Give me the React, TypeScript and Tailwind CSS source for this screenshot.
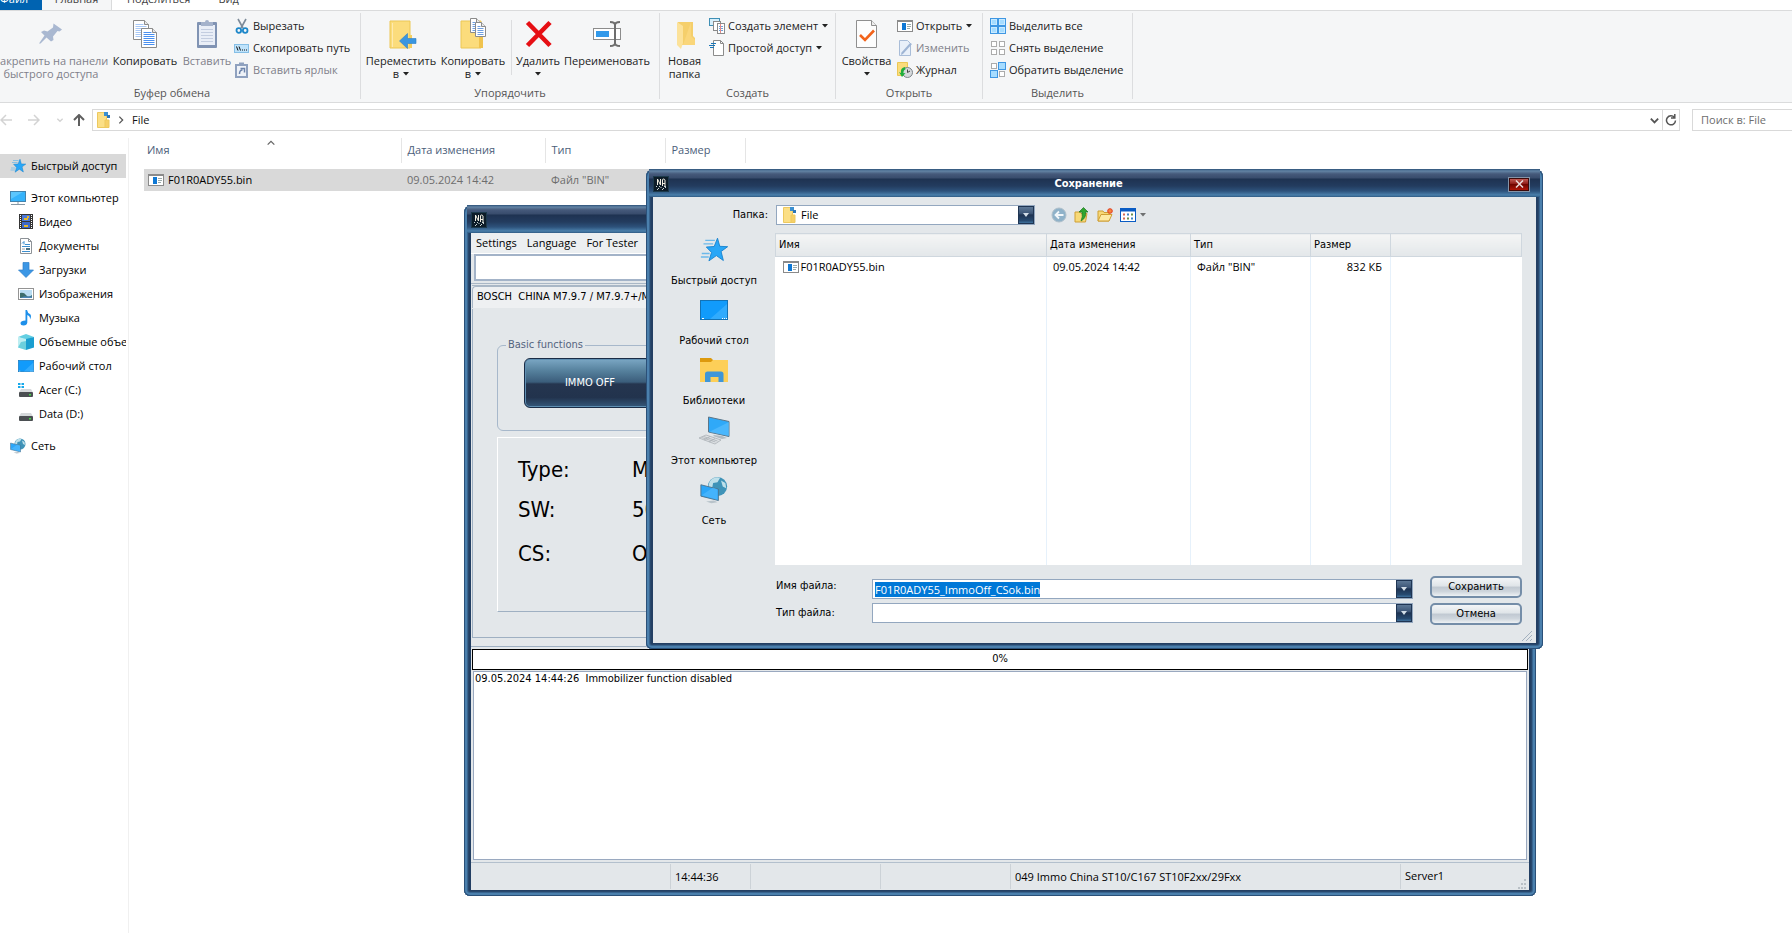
import { useEffect, useRef } from "react";
import type { ReactNode } from "react";

/* ---------- small drawings ---------- */

function Svg({ size = 16, box = 16, children }: { size?: number; box?: number; children: ReactNode }) {
  return (
    <svg width={size} height={size} viewBox={`0 0 ${box} ${box}`} className="block shrink-0" aria-hidden="true">
      {children}
    </svg>
  );
}

const PinIcon = () => (
  <Svg size={32} box={32}>
    <path d="M18.500 6.500L27 12.500 24.500 14.500 22.500 14 18 19.500 18.500 23 16 24.500 11.500 20.500 5.500 26.500 4 26.500 9.500 18.500 6 15 9 13.500 12.500 14.500 18 10.500Z" fill="#a9b8d1" />
  </Svg>
);

const Sheet = ({ x, y, w, h, stroke = "#8b8b8b", line = "#6f9fe0" }: { x: number; y: number; w: number; h: number; stroke?: string; line?: string }) => (
  <g>
    <path d={`M${x} ${y}h${w - 4}l4 4v${h - 4}h-${w}z`} fill="#fff" stroke={stroke} />
    <path d={`M${x + w - 4} ${y}v4h4`} fill="#e8e8e8" stroke={stroke} />
    {[4, 6, 8, 10, 12, 14, 16].filter((d) => d < h - 1).map((d) => (
      <path key={d} d={`M${x + 2} ${y + d}h${d < 5 ? w - 7 : w - 4}`} stroke={line} />
    ))}
  </g>
);

const CopyIcon = () => (
  <Svg size={32} box={32}>
    <Sheet x={4.5} y={3.5} w={15} h={19} line="#a9c8f5" />
    <Sheet x={12.5} y={11.5} w={15} h={19} line="#4a90f0" />
  </Svg>
);

const PasteIcon = () => (
  <Svg size={32} box={32}>
    <rect x="6" y="5" width="20" height="26" rx="1" fill="#8093b3" />
    <rect x="8" y="8" width="16" height="20" fill="#e9eef7" />
    <path d="M10 12.500h12M10 15.500h12M10 18.500h12M10 21.500h12M10 24.500h12" stroke="#c3cde0" />
    <path d="M10 5h4a2 2 0 0 1 4 0h4v4H10z" fill="#a4b2cb" />
  </Svg>
);

const CutIcon = () => (
  <Svg>
    <path d="M4 1l5 9M12 1L7 10" stroke="#7d8b99" strokeWidth="1.600" fill="none" />
    <circle cx="4.800" cy="12.500" r="2.300" fill="none" stroke="#1d87c9" strokeWidth="1.800" />
    <circle cx="11.200" cy="12.500" r="2.300" fill="none" stroke="#1d87c9" strokeWidth="1.800" />
  </Svg>
);

const PathIcon = () => (
  <Svg>
    <rect x="0.500" y="4.500" width="14" height="8" fill="#bfe3fb" stroke="#86bfe6" />
    <path d="M2.500 6.500l1.500 4M5 6.500l1.500 4" stroke="#111" />
    <path d="M8 10h1M10 10h1M12 10h1" stroke="#111" />
  </Svg>
);

const PasteLinkIcon = () => (
  <Svg>
    <rect x="1" y="2" width="13" height="14" fill="#8fa1bf" />
    <rect x="3" y="4" width="9" height="10" fill="#eef2f8" />
    <rect x="5" y="0.500" width="5" height="3" fill="#8fa1bf" />
    <path d="M5.500 12c0-3 1-4 3-4M6.500 6.500h4v4" stroke="#6d84ab" strokeWidth="1.500" fill="none" />
  </Svg>
);

const MoveIcon = () => (
  <Svg size={32} box={32}>
    <path d="M5 4h20v27H5z" fill="#fbdc7c" stroke="#ecc755" />
    <path d="M24 18h3v13h-3z" fill="#f5cf60" />
    <path d="M7.500 6v24" stroke="#fdeab0" />
    <path d="M14.500 24l8-7.500v5H31v5h-8.500v5z" fill="#3a96e0" stroke="#2b7fc7" strokeWidth="0.600" />
  </Svg>
);

const CopyToIcon = () => (
  <Svg size={32} box={32}>
    <path d="M4 4h20v27H4z" fill="#fbdc7c" stroke="#ecc755" />
    <path d="M22 20h4v11h-4z" fill="#f0c34e" />
    <Sheet x={13.5} y={1.5} w={10} h={14} />
    <Sheet x={18.5} y={5.5} w={10} h={14} />
  </Svg>
);

const DeleteIcon = () => (
  <Svg size={32} box={32}>
    <path d="M5.500 5.500L28 28.500M28 5.500L5.500 28.500" stroke="#e60f14" strokeWidth="4.600" />
  </Svg>
);

const RenameIcon = () => (
  <Svg size={32} box={32}>
    <rect x="2.500" y="11.500" width="27" height="11" fill="#fff" stroke="#8c8c8c" />
    <rect x="5" y="14" width="13" height="6" fill="#3299ea" />
    <path d="M19 5q5 0 5 3q0-3 5-3M19 29q5 0 5-3q0 3 5 3M24 7v20" stroke="#6e6e6e" strokeWidth="2" fill="none" />
  </Svg>
);

const NewFolderIcon = () => (
  <Svg size={32} box={32}>
    <path d="M9 5h15v14l2 2v7H12z" fill="#f5cf6b" />
    <path d="M8 5l6 4v17l-2 6-4-4z" fill="#fce29a" />
    <path d="M22 5v14l4 4v5H14" fill="#fad67a" />
  </Svg>
);

const NewItemIcon = () => (
  <Svg>
    <rect x="0.500" y="0.500" width="10" height="7" fill="#d7effb" stroke="#3f8fb5" />
    <rect x="4.500" y="3.500" width="7" height="9" fill="#fff" stroke="#8b8b8b" />
    <rect x="8.500" y="5.500" width="7" height="10" fill="#fff" stroke="#8b8b8b" />
    <path d="M10 8.500h4M10 10.500h4M10 12.500h4" stroke="#6ca0dc" />
    <path d="M11.500 6v9" stroke="#e58b8b" />
  </Svg>
);

const EasyAccessIcon = () => (
  <Svg>
    <path d="M4.500 0.500h7l3 3v12h-10z" fill="#fff" stroke="#8b8b8b" />
    <path d="M11.500 0.500v3h3" fill="none" stroke="#8b8b8b" />
    <path d="M2 3.500h5M0 5.500h6M1 7.500h4" stroke="#1b77b8" />
  </Svg>
);

const PropertiesIcon = () => (
  <Svg size={32} box={32}>
    <path d="M5.500 3.500h15l5 5v22h-20z" fill="#fdfdfd" stroke="#8f8f8f" />
    <path d="M20.500 3.500v5h5" fill="#eee" stroke="#8f8f8f" />
    <path d="M9 18l5 5 9-9.500" stroke="#f2631b" strokeWidth="2.600" fill="none" />
  </Svg>
);

const BinIcon = () => (
  <Svg>
    <rect x="0.500" y="2.500" width="15" height="11" fill="#fff" stroke="#8a8a8a" />
    <path d="M0 3h16" stroke="#8a8a8a" strokeWidth="2" />
    <rect x="5" y="5" width="4" height="7" fill="#0f78d4" />
    <path d="M10 6.500h4M10 8.500h4M10 10.500h3" stroke="#9aa" />
  </Svg>
);

const EditIcon = () => (
  <Svg>
    <path d="M2.500 0.500h8l3 3v12h-11z" fill="#e9f0f9" stroke="#a9bdd8" />
    <path d="M15 4L6 14l-2 1 .5-2.500L13 3z" fill="#9fb5d4" />
  </Svg>
);

const HistoryIcon = () => (
  <Svg>
    <path d="M0.500 0.500h10v13h-10z" fill="#fbdc7c" stroke="#ecc755" />
    <circle cx="10.500" cy="10.500" r="5" fill="#d5d9dc" stroke="#7c8388" />
    <path d="M10.500 7.500v3l2.500-1.500" stroke="#444" fill="none" />
    <path d="M8 5q-5 1-4 6l-2-1 3 5 3.500-4-2 .3q-.5-3 2-4z" fill="#1fae3c" />
  </Svg>
);

const tiles = [[1, 1], [9, 1], [1, 9], [9, 9]];

const SelectAllIcon = () => (
  <Svg>
    <rect width="16" height="16" fill="#3f97e3" />
    {tiles.map(([x, y]) => (
      <rect key={`${x}${y}`} x={x + 0.5} y={y + 0.5} width="5" height="5" fill="#a6dcff" stroke="#c9eaff" />
    ))}
  </Svg>
);
const SelectNoneIcon = () => (
  <Svg>
    {tiles.map(([x, y]) => (
      <rect key={`${x}${y}`} x={x + 0.5} y={y + 0.5} width="5" height="5" fill="#fff" stroke="#ababab" />
    ))}
  </Svg>
);
const InvertIcon = () => (
  <Svg>
    <rect x="1.500" y="1.500" width="5" height="5" fill="#fff" stroke="#ababab" />
    <rect x="9.500" y="9.500" width="5" height="5" fill="#fff" stroke="#ababab" />
    <rect x="8.500" y="0.500" width="7" height="7" fill="#a6dcff" stroke="#3f97e3" />
    <rect x="0.500" y="8.500" width="7" height="7" fill="#a6dcff" stroke="#3f97e3" />
  </Svg>
);

const FolderDoc = () => (
  <Svg>
    <path d="M1.500 0.500h9v15h-9z" fill="#fbdf86" stroke="#edc95f" />
    <path d="M9 8h4v7.500H9z" fill="#f6d068" stroke="#edc95f" />
    <rect x="8" y="0" width="4" height="4" fill="#3a8fd0" />
    <rect x="11" y="3" width="3" height="3" fill="#2c76b8" />
  </Svg>
);

const StarIcon = ({ size = 16 }: { size?: number }) => (
  <Svg size={size} box={32}>
    <path d="M6 5h11M4 9h11M2 20h9M1 24h9" stroke="#6cb9ea" strokeWidth="1.500" />
    <path d="M20 2.500l2.600 9.300 9 .4-7.500 5.500 2.600 10.300-8-5.600-8.500 6 3-9.600-6-6.200 9-.6z" fill="#29a7f7" stroke="#1580cd" />
  </Svg>
);

const ScreenIcon = () => (
  <Svg>
    <rect x="0.500" y="1.500" width="15" height="10" fill="#35b3fb" stroke="#4283ad" />
    <path d="M1 9L13 2H1z" fill="#74d2ff" opacity=".6" />
    <path d="M8 12v2M1 14.500h14" stroke="#8798a5" />
  </Svg>
);

const VideoIcon = () => (
  <Svg>
    <rect x="1" y="0" width="14" height="15" fill="#353535" />
    <rect x="4" y="1" width="8" height="6" fill="#4d79d8" />
    <rect x="4" y="8" width="8" height="6" fill="#3d67c8" />
    <path d="M2.500 1v13M13.500 1v13" stroke="#fff" strokeDasharray="1 1" />
    <path d="M6 5h4M6 12h4M9 3h2" stroke="#e7b828" strokeWidth="2" />
  </Svg>
);

const DocumentIcon = () => (
  <Svg>
    <path d="M2.500 0.500h8l3 3v12h-11z" fill="#fff" stroke="#8d9297" />
    <path d="M10.500 0.500v3h3" fill="none" stroke="#8d9297" />
    <path d="M4 5.500l2-2v3M7 6.500h5M4 8.500h8M4 13.500h8" stroke="#3d8fcf" fill="none" />
    <path d="M4 11h3" stroke="#a4a4a4" />
    <rect x="8" y="10" width="4" height="2" fill="#4c7080" />
  </Svg>
);

const DownloadIcon = () => (
  <Svg>
    <path d="M5 0.500h6V8h4.500L8 15.500.500 8H5z" fill="#3c97e5" stroke="#2f7fc9" strokeWidth="0.700" />
  </Svg>
);

const PictureIcon = () => (
  <Svg>
    <rect x="0.500" y="2.500" width="15" height="11" fill="#fff" stroke="#949494" />
    <rect x="2" y="4" width="12" height="8" fill="#b9ddf3" />
    <path d="M2 7q4-1 6 2t6 0v3H2z" fill="#3d6e6c" />
    <path d="M6 10.500h8V12H2z" fill="#4a86b8" />
  </Svg>
);

const MusicIcon = () => (
  <Svg>
    <path d="M7.500 0H9q.5 3 3 4 2 1.500 0 5.500Q12.500 6 9.300 5v7.500Q9 15.500 5.500 15.500 2.500 15.500 2.500 13q.3-2.600 5-2.600z" fill="#1e90ea" />
  </Svg>
);

const CubeIcon = () => (
  <Svg>
    <path d="M0 3l8-3 8 3-8 3z" fill="#63cfe2" />
    <path d="M0 3l8 2v11l-8-2.500z" fill="#bdeef2" />
    <path d="M16 3L8 5v11l8-2.500z" fill="#1a9ed0" />
    <path d="M3 8l5-1v9l-8-2.500z" fill="#47c2d4" opacity=".7" />
  </Svg>
);

const DesktopIcon = ({ w = 16, h = 12 }: { w?: number; h?: number }) => (
  <svg width={w} height={h} viewBox="0 0 28 20" preserveAspectRatio="none" className="block shrink-0" aria-hidden="true">
    <rect x="0.500" y="0.500" width="27" height="19" fill="#119bfb" stroke="#1272b6" />
    <path d="M10 19L27 4v15z" fill="#48b6ff" opacity=".6" />
    <path d="M2 18.500h2M22 18.500h1M24 18.500h1M26 18.500h1" stroke="#fff" />
  </svg>
);

const DriveIcon = ({ win }: { win?: boolean }) => (
  <Svg>
    <path d="M3 7h10l2 3.500H1z" fill="#d6d9db" />
    <rect x="1" y="10" width="14" height="5" rx="1" fill="#4b4f52" />
    <rect x="11" y="12" width="2" height="1.500" fill="#45d845" />
    {win && <path d="M0 1h2.500v2H0zM3.500 1H6v2H3.500zM0 4h2.500v2H0zM3.500 4H6v2H3.500z" fill="#18a9ea" />}
  </Svg>
);

const NetworkIcon = ({ size = 16 }: { size?: number }) => (
  <Svg size={size} box={32}>
    <circle cx="20" cy="12" r="11" fill="#3f93b8" />
    <path d="M13 4q5-4 10-2l-3 5-5 1-1 5-4 1q-1-6 3-10zM24 5l5 3 1 6-4-2z" fill="#bfe0ea" />
    <path d="M1 10l20 5v13L1 23z" fill="#2ba6f8" stroke="#4d6f87" />
    <path d="M2 22l13-9 5 2v12z" fill="#55bdff" opacity=".6" />
    <path d="M7 29l6 2 7-1-4-2z" fill="#b8c3ca" />
  </Svg>
);

const LibraryIcon = () => (
  <Svg size={32} box={32}>
    <path d="M2 4h11l2 2v4H2z" fill="#dd9a0e" />
    <path d="M2 8h11l2-2h15v22H2z" fill="#fdcf58" />
    <path d="M7 28V20q0-2.500 2.500-2.500h13.500q2.500 0 2.500 2.500v8h-5v-5h-8v5z" fill="#3f96d8" />
  </Svg>
);

const LaptopIcon = () => (
  <Svg size={32} box={32}>
    <path d="M10.500 3L31 7.500v15L10.500 18z" fill="#2fa9f8" stroke="#5b7689" />
    <path d="M11 18L31 8v14z" fill="#62c3ff" opacity=".55" />
    <path d="M16 21l8 1 5 2-5 1-9-3z" fill="#b3bcc2" />
    <path d="M1 24l7-3 15 5-6 4z" fill="#dfe2e5" stroke="#a9b0b5" strokeWidth="0.800" />
    <path d="M3.500 23.500l14 4.500M5.500 22.500l14 4.500M6 26l6-3.500M11 28l6-3.500" stroke="#a9b0b5" strokeWidth="0.800" />
  </Svg>
);

const AppIcon = ({ cls = "" }: { cls?: string }) => (
  <span className={`block size-4 shrink-0 ${cls}`}>
    <Svg>
      <rect width="16" height="16" fill="#0d1c28" />
      <rect x="0.500" y="0.500" width="15" height="15" fill="none" stroke="#1c3a4c" />
      <path d="M4.500 9V3l3 6V3M9.500 10V4q0-1 1-1t1.500 1v6M9 7.500h3" stroke="#f3efe2" fill="none" />
      <path d="M3 10.500h1M5 12.500h1M7.500 11.500h1M10 12.500h1M4 13.500h1M9 13.500h1M12 11.500h1M6 10.500h1M11 10.500h2" stroke="#c9d4d4" />
    </Svg>
  </span>
);

const Caret = () => (
  <svg width="6" height="4" viewBox="0 0 6 4" className="block shrink-0" aria-hidden="true">
    <path d="M0 0h6L3 3.500z" fill="#222" />
  </svg>
);

/* ---------- explorer ribbon ---------- */

function BigButton({ icon, lines, width, caret, dim }: { icon: ReactNode; lines: string[]; width: string; caret?: boolean; dim?: boolean }) {
  return (
    <button className={`flex shrink-0 flex-col items-center pt-1 leading-[13px] ${width} ${dim ? "text-[#80808a]" : "text-[#222]"}`}>
      <span className="mb-[5px]">{icon}</span>
      {lines.map((l, i) => (
        <span key={i} className="flex h-[13px] items-center gap-1 whitespace-nowrap">
          {l}
          {caret && i === lines.length - 1 && <Caret />}
        </span>
      ))}
    </button>
  );
}

function SmallButton({ icon, label, caret, dim }: { icon: ReactNode; label: string; caret?: boolean; dim?: boolean }) {
  return (
    <button className={`flex h-[22px] items-center whitespace-nowrap ${dim ? "text-[#80808a]" : "text-[#222]"}`}>
      {icon}
      <span className="ml-[3px]">{label}</span>
      {caret && <span className="ml-1"><Caret /></span>}
    </button>
  );
}

function RibbonGroup({ title, width, titlePad = "", children }: { title: string; width: string; titlePad?: string; children: ReactNode }) {
  return (
    <section className={`flex h-[86px] shrink-0 flex-col justify-between border-r border-[#dcdddf] ${width}`}>
      <div className="flex">{children}</div>
      <h2 className={`text-center leading-3 text-[#555] ${titlePad}`}>{title}</h2>
    </section>
  );
}

function Ribbon() {
  return (
    <header>
      <nav className="flex h-[11px] items-end overflow-hidden border-b border-[#dadbdc] leading-4 text-[#444]">
        <a href="#file" className="w-[42px] bg-[#0063b1] pb-[3px] text-white">Файл</a>
        <a href="#home" className="flex w-[70px] justify-center border-r border-[#dadbdc] bg-[#f5f6f7] pb-[3px]">Главная</a>
        <a href="#share" className="ml-[15px] pb-[3px]">Поделиться</a>
        <a href="#view" className="ml-7 pb-[3px]">Вид</a>
      </nav>
      <div className="flex border-b border-[#dadbdc] bg-[#f5f6f7] pt-[2px] pb-[3px]">
        <RibbonGroup title="Буфер обмена" width="w-[361px]" titlePad="pr-4">
          <div className="-ml-[6px] flex gap-[2px]">
            <BigButton dim width="w-[114px]" icon={<PinIcon />} lines={["Закрепить на панели", "быстрого доступа"]} />
            <BigButton width="w-[70px]" icon={<CopyIcon />} lines={["Копировать"]} />
            <BigButton dim width="w-[50px]" icon={<PasteIcon />} lines={["Вставить"]} />
            <div className="flex flex-col pt-[2px]">
              <SmallButton icon={<CutIcon />} label="Вырезать" />
              <SmallButton icon={<PathIcon />} label="Скопировать путь" />
              <SmallButton dim icon={<PasteLinkIcon />} label="Вставить ярлык" />
            </div>
          </div>
        </RibbonGroup>
        <RibbonGroup title="Упорядочить" width="w-[299px]">
          <div className="flex pl-[3px]">
            <BigButton caret width="w-[74px]" icon={<MoveIcon />} lines={["Переместить", "в"]} />
            <BigButton caret width="w-[70px]" icon={<CopyToIcon />} lines={["Копировать", "в"]} />
            <span className="mx-[3px] mt-[7px] h-[55px] w-px bg-[#dcdddf]" />
            <BigButton caret width="w-[46px]" icon={<DeleteIcon />} lines={["Удалить", ""]} />
            <BigButton width="w-[92px]" icon={<RenameIcon />} lines={["Переименовать"]} />
          </div>
        </RibbonGroup>
        <RibbonGroup title="Создать" width="w-[176px]">
          <BigButton width="w-[49px]" icon={<NewFolderIcon />} lines={["Новая", "папка"]} />
          <div className="flex flex-col pt-[2px]">
            <SmallButton caret icon={<NewItemIcon />} label="Создать элемент" />
            <SmallButton caret icon={<EasyAccessIcon />} label="Простой доступ" />
          </div>
        </RibbonGroup>
        <RibbonGroup title="Открыть" width="w-[147px]">
          <BigButton caret width="w-[61px]" icon={<PropertiesIcon />} lines={["Свойства", ""]} />
          <div className="flex flex-col pt-[2px]">
            <SmallButton caret icon={<BinIcon />} label="Открыть" />
            <SmallButton dim icon={<EditIcon />} label="Изменить" />
            <SmallButton icon={<HistoryIcon />} label="Журнал" />
          </div>
        </RibbonGroup>
        <RibbonGroup title="Выделить" width="w-[150px]">
          <div className="flex flex-col pt-[2px] pl-[7px]">
            <SmallButton icon={<SelectAllIcon />} label="Выделить все" />
            <SmallButton icon={<SelectNoneIcon />} label="Снять выделение" />
            <SmallButton icon={<InvertIcon />} label="Обратить выделение" />
          </div>
        </RibbonGroup>
      </div>
    </header>
  );
}

function Stroke({ d, color, w = 12, sw = 1.5 }: { d: string; color: string; w?: number; sw?: number }) {
  return (
    <svg width={w} height={w} viewBox="0 0 12 12" className="block shrink-0" aria-hidden="true">
      <path d={d} fill="none" stroke={color} strokeWidth={sw} />
    </svg>
  );
}

function AddressBar() {
  return (
    <div className="mt-[6px] flex h-[22px] items-stretch text-[#111]">
      <div className="flex w-[92px] items-center">
        <button aria-label="Назад" className="w-7"><Stroke d="M12 6H1M6 1L1 6l5 5" color="#d3d3d3" /></button>
        <button aria-label="Вперёд" className="w-7"><Stroke d="M0 6h11M6 1l5 5-5 5" color="#d3d3d3" /></button>
        <button aria-label="Недавние" className="w-[17px]"><Stroke d="M2 4l4 4 4-4" color="#d3d3d3" w={8} sw={2} /></button>
        <button aria-label="Вверх"><Stroke d="M6 12V1M1 6l5-5 5 5" color="#5f5f5f" sw={2} /></button>
      </div>
      <div className="flex flex-1 items-center border border-[#d9d9d9] pl-[3px]">
        <FolderDoc />
        <span className="ml-1"><Stroke d="M4 2l4 4-4 4" color="#555" w={10} /></span>
        <span className="ml-[6px] flex-1">File</span>
        <button aria-label="Журнал адресов" className="mr-[2px]"><Stroke d="M2 4l4 4 4-4" color="#555" w={11} sw={2} /></button>
        <button aria-label="Обновить" className="flex h-full w-[17px] items-center justify-center border-l border-[#d9d9d9]">
          <Stroke d="M9.500 3.500A4.500 4.500 0 1 0 10.500 6.500M9.800 0v4H6" color="#555" />
        </button>
      </div>
      <input aria-label="Поиск в: File" placeholder="Поиск в: File" className="-mr-[2px] ml-3 w-[102px] border border-[#d9d9d9] px-2 outline-none placeholder:text-[#6d6d6d]" />
    </div>
  );
}

const navItems: { label: string; icon: ReactNode }[] = [
  { label: "Видео", icon: <VideoIcon /> },
  { label: "Документы", icon: <DocumentIcon /> },
  { label: "Загрузки", icon: <DownloadIcon /> },
  { label: "Изображения", icon: <PictureIcon /> },
  { label: "Музыка", icon: <MusicIcon /> },
  { label: "Объемные объекты", icon: <CubeIcon /> },
  { label: "Рабочий стол", icon: <DesktopIcon /> },
  { label: "Acer (C:)", icon: <DriveIcon win /> },
  { label: "Data (D:)", icon: <DriveIcon /> },
];

function NavRow({ icon, label, cls = "" }: { icon: ReactNode; label: string; cls?: string }) {
  return (
    <a href="#nav" className={`flex h-6 items-center gap-[5px] overflow-hidden whitespace-nowrap ${cls}`}>
      {icon}
      {label}
    </a>
  );
}

function Explorer() {
  return (
    <div className="flex min-h-screen flex-col">
      <Ribbon />
      <AddressBar />
      <div className="flex flex-1 pt-[7px]">
        <nav className="w-[129px] shrink-0 border-r border-[#f0f0f0] pt-4 pr-[2px] text-black">
          <NavRow cls="bg-[#d9d9d9] pl-[10px]" icon={<StarIcon />} label="Быстрый доступ" />
          <NavRow cls="mt-2 pl-[10px]" icon={<ScreenIcon />} label="Этот компьютер" />
          {navItems.map((n) => (
            <NavRow key={n.label} cls="pl-[18px]" icon={n.icon} label={n.label} />
          ))}
          <NavRow cls="mt-2 pl-[10px]" icon={<NetworkIcon />} label="Сеть" />
        </nav>
        <main className="relative pl-[15px]">
          <span className="absolute top-0 left-[137px]"><Stroke d="M2 8l4-4 4 4" color="#666" w={10} /></span>
          <table className="w-[601px] table-fixed border-collapse text-left">
            <colgroup>
              <col className="w-[257px]" />
              <col className="w-36" />
              <col className="w-[120px]" />
              <col className="w-20" />
            </colgroup>
            <thead>
              <tr className="h-[25px] text-[#4c607a]">
                <th className="border-r border-[#e5e5e5] pl-[3px] font-normal">Имя</th>
                <th className="border-r border-[#e5e5e5] pl-[6px] font-normal">Дата изменения</th>
                <th className="border-r border-[#e5e5e5] pl-[6px] font-normal">Тип</th>
                <th className="border-r border-[#e5e5e5] pl-[6px] font-normal">Размер</th>
              </tr>
            </thead>
            <tbody>
              <tr><td colSpan={4} className="h-[6px]" /></tr>
              <tr className="h-[22px] bg-[#d9d9d9] text-[#6d6d6d]">
                <td className="pl-1 text-black">
                  <span className="flex items-center gap-1"><BinIcon />F01R0ADY55.bin</span>
                </td>
                <td className="pl-[6px]">09.05.2024 14:42</td>
                <td className="pl-[6px]">Файл "BIN"</td>
                <td />
              </tr>
            </tbody>
          </table>
        </main>
      </div>
    </div>
  );
}

/* ---------- skinned windows ---------- */

const frame =
  "rounded-t-lg rounded-b-md bg-[#233f63] px-[7px] pb-[6px] shadow-[inset_0_0_0_1px_#2b5078,inset_0_0_0_3px_#4b80ad,inset_0_0_0_4px_#38648f,inset_0_0_0_5px_#28486d]";
const titleBar =
  "-mx-[4px] flex items-center bg-[linear-gradient(to_bottom,#2b5078_0px,#6384a5_2px,#45597a_5px,#384c6c_9px,#1e3251_10px,#233c5f_17px,#2d527b_22px,#4a7fab_26px,#2f5a84_28px)]";

function ToolWindow() {
  return (
    <section className={`absolute top-[205px] left-[464px] flex h-[691px] w-[1072px] flex-col ${frame}`}>
      <div className={`h-7 shrink-0 pt-[2px] pl-[4px] ${titleBar}`}><AppIcon /></div>
      <div className="flex flex-1 flex-col bg-[#e3e7ea] text-black">
        <nav className="flex h-5 items-center gap-[10px] bg-[#eceff1] pl-[5px] font-['Open_Sans','Noto_Sans',sans-serif]">
          <button>Settings</button>
          <button>Language</button>
          <button>For Tester</button>
        </nav>
        <div className="border-y border-[#a9b7c6] border-t-white px-[3px] pb-[2px]">
          <input aria-label="Файл" className="block h-[27px] w-full border-2 border-[#a3b3c8] bg-white outline-none" />
        </div>
        <div className="mx-px mt-[1px] h-[24px] border-t border-[#a9b7c6]">
          <button className="h-[22px] rounded-tl border-t border-l border-[#a9b7c6] bg-[#eef0f2] px-1 whitespace-pre">BOSCH  CHINA M7.9.7 / M7.9.7+/ME7.9.7</button>
        </div>
        <div className="mx-px flex h-[329px] flex-col border-b border-l border-[#9fb0c2] pt-[28px] pl-6">
          <fieldset className="mr-6 h-[94px] rounded-md border border-[#a7b8cb] pl-[26px]">
            <legend className="-ml-[18px] px-[2px] leading-4 text-[#54647f]">Basic functions</legend>
            <button className="mt-[5px] flex h-[50px] w-[132px] items-center justify-center rounded-md border border-[#1b2d47] bg-[linear-gradient(to_bottom,#7ba7c4_0%,#55809c_25%,#3b5d7b_48%,#25354f_52%,#22334d_80%,#35587a_100%)] text-white shadow-[inset_0_0_0_1px_#5f8fb2]">
              IMMO OFF
            </button>
          </fieldset>
          <dl className="mt-[6px] mr-6 grid h-[175px] grid-cols-[114px_1fr] content-start border-t border-b border-l border-white border-b-[#9fb0c2] pt-3 pl-5 text-[22px] leading-10">
            <dt>Type:</dt>
            <dd>M7.9.7</dd>
            <dt>SW:</dt>
            <dd>50</dd>
            <dt className="pt-1">CS:</dt>
            <dd className="pt-1">OK</dd>
          </dl>
        </div>
        <div className="mt-2 flex flex-1 flex-col border-t border-[#9fb0c2] px-px pt-[2px]">
          <div role="progressbar" aria-valuenow={0} aria-label="Ход" className="flex h-[21px] items-center justify-center border border-black bg-white">0%</div>
          <div className="mx-px mt-px flex-1 border border-[#9aa9c0] bg-white px-px leading-[14px] whitespace-pre">
            09.05.2024 14:44:26  Immobilizer function disabled
          </div>
        </div>
        <footer className="relative mt-[2px] flex h-7 items-center border-t border-[#b3c0cd] font-['Open_Sans','Noto_Sans',sans-serif]">
          <span className="h-[25px] w-[200px] border-r border-[#ccd2d7]" />
          <span className="h-[25px] w-[80px] border-r border-[#ccd2d7] pl-1 leading-[25px]">14:44:36</span>
          <span className="h-[25px] w-[130px] border-r border-[#ccd2d7]" />
          <span className="h-[25px] w-[130px] border-r border-[#ccd2d7]" />
          <span className="h-[25px] flex-1 border-r border-[#ccd2d7] pl-1 leading-[25px]">049 Immo China ST10/C167 ST10F2xx/29Fxx</span>
          <span className="w-[128px] pl-1">Server1</span>
          <svg width="10" height="10" viewBox="0 0 10 10" className="absolute right-px bottom-px" aria-hidden="true">
            <path d="M6 0h2v2H6zM6 4h2v2H6zM3 4h2v2H3zM0 8h2v2H0zM3 8h2v2H3zM6 8h2v2H6z" fill="#b9c0c6" />
          </svg>
        </footer>
      </div>
    </section>
  );
}

const DropArrow = () => (
  <span className="pointer-events-none absolute top-px right-px bottom-px flex w-4 items-center justify-center border border-[#1f3553] bg-[linear-gradient(to_bottom,#5d7896_0%,#3d5677_40%,#1e3352_50%,#274a70_85%,#3f719d_100%)]">
    <svg width="6" height="4" viewBox="0 0 6 4" aria-hidden="true"><path d="M0 0h6L3 4z" fill="#d3dee8" /></svg>
  </span>
);

const places: { label: string; icon: ReactNode }[] = [
  { label: "Быстрый доступ", icon: <StarIcon size={28} /> },
  { label: "Рабочий стол", icon: <DesktopIcon w={28} h={20} /> },
  { label: "Библиотеки", icon: <LibraryIcon /> },
  { label: "Этот компьютер", icon: <LaptopIcon /> },
  { label: "Сеть", icon: <NetworkIcon size={28} /> },
];

const skinButton =
  "h-[22px] w-[92px] rounded-[5px] border-2 border-[#748da8] bg-[linear-gradient(to_bottom,#f3f5f7_0%,#dfe4e8_45%,#c0c8d1_50%,#ced5dc_75%,#edf1f4_100%)] leading-[18px]";
const headCell = "border border-[#cfd7de] bg-[linear-gradient(to_bottom,#f4f5f5,#e3e7ea)] pl-[3px] font-normal";
const bodyCell = "border-r border-[#e6f1fb] align-top";

function SaveDialog() {
  const nameRef = useRef<HTMLInputElement>(null);
  useEffect(() => {
    nameRef.current?.focus();
    nameRef.current?.select();
  }, []);

  return (
    <section role="dialog" aria-label="Сохранение" className={`absolute top-[169px] left-[646px] flex h-[480px] w-[897px] flex-col ${frame}`}>
      <div className={`relative h-7 shrink-0 justify-center pt-[2px] ${titleBar}`}>
        <AppIcon cls="absolute left-[4px]" />
        <h1 className="pr-3 font-bold text-white">Сохранение</h1>
        <button aria-label="Закрыть" className="absolute right-[11px] flex h-[13px] w-5 items-center justify-center border border-[#3d0a0a] bg-[linear-gradient(to_bottom,#c25b55_0%,#8e1a16_45%,#700500_50%,#b01408_100%)] outline outline-[#8494a8]">
          <svg width="9" height="8" viewBox="0 0 9 8" aria-hidden="true"><path d="M1 0.500l7 7M8 0.500l-7 7" stroke="#eadada" strokeWidth="1.500" /></svg>
        </button>
      </div>
      <div className="flex flex-1 flex-col bg-[#e3e7ea] text-black">
        <div className="flex items-center pt-2">
          <label htmlFor="folder" className="w-[123px] pr-2 text-right">Папка:</label>
          <div className="relative h-5 w-[259px]">
            <select id="folder" className="h-full w-full appearance-none border border-[#93a7bf] bg-white pl-[24px] font-['Open_Sans','Noto_Sans',sans-serif] leading-4 outline-none">
              <option>File</option>
            </select>
            <span className="pointer-events-none absolute top-[2px] left-[6px]"><FolderDoc /></span>
            <DropArrow />
          </div>
          <div className="ml-4 flex items-center gap-[7px]">
            <button aria-label="Назад">
              <Svg>
                <circle cx="8" cy="8" r="7" fill="#8fb2c9" stroke="#aebfca" />
                <path d="M12.500 8H4.500M8 4.500L4.500 8 8 11.500" stroke="#f2f7fa" strokeWidth="1.800" fill="none" />
              </Svg>
            </button>
            <button aria-label="На один уровень вверх">
              <Svg>
                <path d="M1 5h5l1 1.500h6L11.500 15H1z" fill="#f7d978" stroke="#cf9f35" />
                <path d="M5 5l4.500-4.500L14 5h-2.500q1 6-4.500 9 2-4 1-9z" fill="#2fa52f" stroke="#18751c" strokeWidth="0.700" />
              </Svg>
            </button>
            <button aria-label="Создать папку">
              <Svg>
                <path d="M1 4h5l1 1.500h5V14H1z" fill="#f7d978" stroke="#cf9f35" />
                <path d="M1 14l3-6.500h11L12 14z" fill="#fdeaa5" stroke="#cf9f35" />
                <circle cx="13" cy="4" r="2.300" fill="#f8843c" stroke="#e13d22" />
              </Svg>
            </button>
            <button aria-label="Меню вида" className="flex items-center gap-1">
              <Svg>
                <rect x="0.500" y="1.500" width="15" height="13" fill="#fff" stroke="#0a5cc4" />
                <path d="M0 3h16" stroke="#0a5cc4" strokeWidth="3" />
                <path d="M3 7.500h2M3 11.500h2" stroke="#d46a55" strokeWidth="2" />
                <path d="M7 7.500h2M11 11.500h2" stroke="#3f84c4" strokeWidth="2" />
                <path d="M11 7.500h2M7 11.500h2" stroke="#6a8f4d" strokeWidth="2" />
              </Svg>
              <span className="opacity-60"><Caret /></span>
            </button>
          </div>
        </div>

        <div className="mt-2 flex">
          <nav className="flex w-[122px] shrink-0 flex-col pt-px">
            {places.map((p) => (
              <button key={p.label} className="flex h-[60px] flex-col items-center">
                <span className="flex h-8 items-center">{p.icon}</span>
                <span className="mt-[7px] leading-4">{p.label}</span>
              </button>
            ))}
          </nav>
          <table className="mr-[14px] h-[332px] flex-1 table-fixed border-collapse bg-white text-left font-['Open_Sans','Noto_Sans',sans-serif]">
            <colgroup>
              <col className="w-[271px]" />
              <col className="w-36" />
              <col className="w-[120px]" />
              <col className="w-20" />
              <col />
            </colgroup>
            <thead className="font-['DejaVu_Sans_Condensed','Noto_Sans',sans-serif]">
              <tr className="h-[23px]">
                <th className={headCell}>Имя</th>
                <th className={headCell}>Дата изменения</th>
                <th className={headCell}>Тип</th>
                <th className={headCell}>Размер</th>
                <th className={headCell} aria-label="Прочее" />
              </tr>
            </thead>
            <tbody>
              <tr className="leading-[19px]">
                <td className={`${bodyCell} pl-[7px]`}><span className="flex items-center gap-[2px]"><BinIcon />F01R0ADY55.bin</span></td>
                <td className={`${bodyCell} pl-[6px]`}>09.05.2024 14:42</td>
                <td className={`${bodyCell} pl-[6px]`}>Файл "BIN"</td>
                <td className={`${bodyCell} pr-2 text-right`}>832 КБ</td>
                <td />
              </tr>
            </tbody>
          </table>
        </div>

        <form className="mt-[11px] grid grid-cols-[96px_1fr_92px] gap-y-1 pr-[14px] pl-[123px]" onSubmit={(e) => e.preventDefault()}>
          <label htmlFor="name" className="leading-5">Имя файла:</label>
          <div className="relative mt-[3px] mr-[17px] h-5">
            <input id="name" ref={nameRef} defaultValue="F01R0ADY55_ImmoOff_CSok.bin" className="block h-full w-full border border-[#93a7bf] bg-white pl-[2px] font-['Open_Sans','Noto_Sans',sans-serif] caret-transparent outline-none selection:bg-[#0078d7] selection:text-white" />
            <DropArrow />
          </div>
          <button className={skinButton}>Сохранить</button>
          <label htmlFor="type" className="leading-5">Тип файла:</label>
          <div className="relative mr-[17px] h-5">
            <select id="type" className="block h-full w-full appearance-none border border-[#93a7bf] bg-white outline-none">
              <option> </option>
            </select>
            <DropArrow />
          </div>
          <button className={skinButton}>Отмена</button>
        </form>
        <svg width="10" height="10" viewBox="0 0 10 10" className="mt-auto mr-[4px] mb-[2px] self-end" aria-hidden="true">
          <path d="M0 10L10 0M4 10l6-6M8 10l2-2" stroke="#a3b1bf" />
        </svg>
      </div>
    </section>
  );
}

export default function App() {
  return (
    <div className="relative min-h-screen overflow-hidden bg-white font-['Open_Sans','Noto_Sans',sans-serif] text-[11px]">
      <Explorer />
      <div className="font-['DejaVu_Sans_Condensed','Noto_Sans',sans-serif]">
        <ToolWindow />
        <SaveDialog />
      </div>
    </div>
  );
}
